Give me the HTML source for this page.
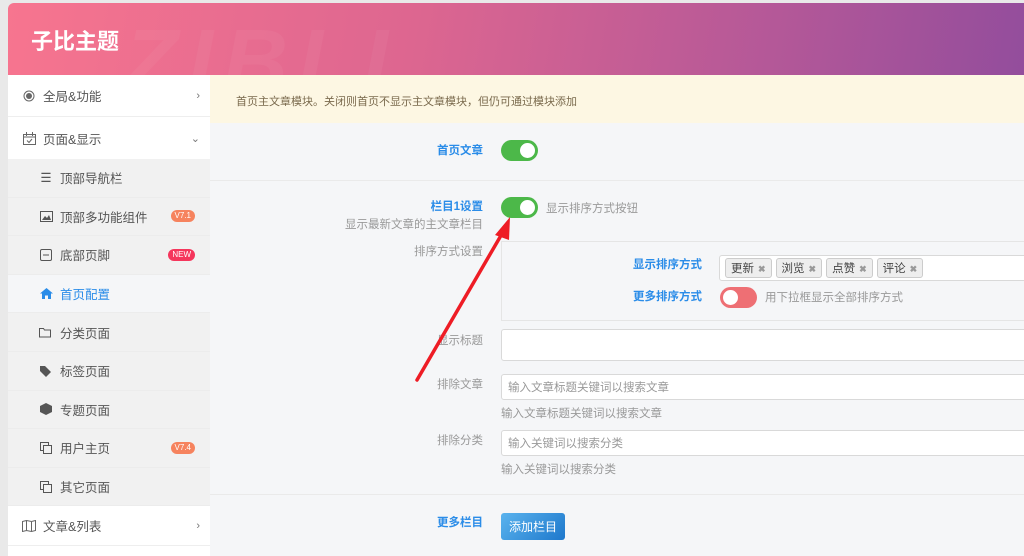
<!DOCTYPE html>
<html><head><meta charset="utf-8"><style>
*{box-sizing:border-box;margin:0;padding:0}
body{width:1024px;height:556px;overflow:hidden;background:#e9e9e9;font-family:"Liberation Sans","Noto Sans CJK SC",sans-serif;font-size:12px;color:#555;position:relative}
.abs{position:absolute}
.hdr{left:8px;top:3px;width:1016px;height:72px;background:linear-gradient(100deg,#f7758f 0%,#dd6690 40%,#b45898 75%,#934d9c 100%);border-radius:6px 0 0 0;overflow:hidden}
.hdr .t{position:absolute;left:23px;top:21px;font-size:22px;font-weight:bold;color:#fff}
.hdr .wm{position:absolute;left:115px;top:8px;font-size:90px;font-weight:900;font-style:italic;color:rgba(255,255,255,0.045);letter-spacing:10px;font-family:"Liberation Sans",sans-serif}
.side{left:8px;top:75px;width:202px;height:481px;background:#fff}
.it{position:absolute;left:0;width:202px;display:flex;align-items:center;font-size:12.5px;color:#555}
.top{background:#fff;height:42px;padding-left:14px}
.top .ic{width:14px;margin-right:7px;display:flex;justify-content:center;color:#777}
.top .ar{position:absolute;right:10px;color:#777;font-size:11px}
.sub{background:#f1f1f1;height:38.6px;padding-left:31px;border-bottom:1px solid #ececec}
.sub .ic{width:14px;margin-right:7px;color:#555;display:flex;justify-content:center}
.bd{position:absolute;right:15px;font-size:8px;color:#fff;border-radius:6px;padding:1px 4px;line-height:10px}
.main{left:210px;top:75px;width:814px;height:481px;background:#f5f6f8}
.note{left:210px;top:75px;width:814px;height:48px;background:#fdf7e3;color:#7a6a4d;font-size:11px;padding:18px 0 0 26px}
.lbl{position:absolute;text-align:right;font-size:11.5px;color:#999;white-space:nowrap}
.blue{color:#2a8ce8;font-weight:bold}
.tg{position:absolute;width:37px;height:21px;border-radius:11px;background:#4cb849}
.tg::after{content:"";position:absolute;right:3px;top:3px;width:15px;height:15px;border-radius:50%;background:#fff}
.tg.off{background:#ee6f74}
.tg.off::after{left:3px;right:auto}
.inp{position:absolute;background:#fff;border:1px solid #d9d9d9;border-radius:3px;color:#999;font-size:11.5px;padding-left:6px;display:flex;align-items:center}
.tag{display:inline-block;background:#eee;border:1px solid #ccc;border-radius:3px;padding:1px 5px;margin-right:4px;font-size:11.5px;color:#444}
.tag b{color:#999;font-size:9px;margin-left:4px}
</style></head><body>
<div class="abs hdr"><div class="wm">ZIBLL</div><div class="t">子比主题</div></div>
<div class="abs side">
<div class="it top" style="top:0;border-bottom:1px solid #eee"><span class="ic"><svg width="12" height="12"><circle cx="6" cy="6" r="5" fill="none" stroke="#666"/><circle cx="6" cy="6" r="3" fill="#666"/></svg></span>全局&amp;功能<span class="ar">›</span></div>
<div class="it top" style="top:42px"><span class="ic"><svg width="13" height="13"><rect x=".5" y="2.5" width="12" height="10" fill="none" stroke="#666"/><path d="M.5 5h12M3.5 0v4M9.5 0v4M4 8.5l2 2 3-3.5" fill="none" stroke="#666"/></svg></span>页面&amp;显示<span class="ar">⌄</span></div>
<div class="it sub" style="top:84px"><span class="ic">☰</span>顶部导航栏</div>
<div class="it sub" style="top:122.6px"><span class="ic"><svg width="13" height="11"><rect x=".5" y=".5" width="12" height="10" fill="none" stroke="#555"/><path d="M2 9l3-4 2 2 2-3 2 5z" fill="#555"/></svg></span>顶部多功能组件<span class="bd" style="background:#f6835e">V7.1</span></div>
<div class="it sub" style="top:161.2px"><span class="ic"><svg width="12" height="12"><rect x=".5" y=".5" width="11" height="11" rx="1.5" fill="none" stroke="#555"/><path d="M3 6h6" stroke="#555"/></svg></span>底部页脚<span class="bd" style="background:#f5365c">NEW</span></div>
<div class="it sub" style="top:199.8px;background:#f5f6f8;color:#2a8ce8"><span class="ic"><svg width="13" height="11"><path d="M6.5 0L13 5.5h-2V11H8V7.5H5V11H2V5.5H0z" fill="#2a8ce8"/></svg></span>首页配置</div>
<div class="it sub" style="top:238.4px"><span class="ic"><svg width="14" height="11"><path d="M.5 1.5h4l1 1.5h6v7h-11z" fill="none" stroke="#555"/></svg></span>分类页面</div>
<div class="it sub" style="top:277px"><span class="ic"><svg width="14" height="12"><path d="M1 1h5l6 6-5 5-6-6z" fill="#555"/></svg></span>标签页面</div>
<div class="it sub" style="top:315.6px"><span class="ic"><svg width="12" height="12"><path d="M6 0l6 3v6l-6 3-6-3V3z" fill="#555"/></svg></span>专题页面</div>
<div class="it sub" style="top:354.2px"><span class="ic"><svg width="12" height="12"><rect x=".5" y=".5" width="8" height="8" fill="none" stroke="#555"/><rect x="3.5" y="3.5" width="8" height="8" fill="#f1f1f1" stroke="#555"/></svg></span>用户主页<span class="bd" style="background:#f6835e">V7.4</span></div>
<div class="it sub" style="top:392.8px"><span class="ic"><svg width="12" height="12"><rect x=".5" y=".5" width="8" height="8" fill="none" stroke="#555"/><rect x="3.5" y="3.5" width="8" height="8" fill="#f1f1f1" stroke="#555"/></svg></span>其它页面</div>
<div class="it top" style="top:431px;height:40px;border-bottom:1px solid #eee"><span class="ic"><svg width="14" height="12"><path d="M.5 1.5l4-1 5 1 4-1v10l-4 1-5-1-4 1z M4.5.5v10 M9.5 1.5v10" fill="none" stroke="#666"/></svg></span>文章&amp;列表<span class="ar">›</span></div>
</div>
<div class="abs main"></div>
<div class="abs note">首页主文章模块。关闭则首页不显示主文章模块，但仍可通过模块添加</div>
<div class="abs" style="left:210px;top:180px;width:814px;height:1px;background:#eaeaea"></div>
<div class="abs" style="left:210px;top:494px;width:814px;height:1px;background:#eaeaea"></div>
<div class="lbl blue" style="right:541px;top:142px">首页文章</div>
<div class="tg" style="left:501px;top:140px"></div>
<div class="lbl blue" style="right:541px;top:198px">栏目1设置</div>
<div class="lbl" style="right:541px;top:216px">显示最新文章的主文章栏目</div>
<div class="tg" style="left:501px;top:197px"></div>
<div class="lbl" style="left:546px;top:200px">显示排序方式按钮</div>
<div class="lbl" style="right:541px;top:243px">排序方式设置</div>
<div class="abs" style="left:501px;top:241px;width:530px;height:80px;border:1px solid #e5e5e5;background:#f5f6f8"></div>
<div class="lbl blue" style="right:322px;top:256px">显示排序方式</div>
<div class="inp" style="left:719px;top:255px;width:310px;height:26px;padding-left:5px"><span class="tag">更新<b>✖</b></span><span class="tag">浏览<b>✖</b></span><span class="tag">点赞<b>✖</b></span><span class="tag">评论<b>✖</b></span></div>
<div class="lbl blue" style="right:322px;top:288px">更多排序方式</div>
<div class="tg off" style="left:720px;top:287px"></div>
<div class="lbl" style="left:765px;top:289px">用下拉框显示全部排序方式</div>
<div class="lbl" style="right:541px;top:332px">显示标题</div>
<div class="inp" style="left:501px;top:329px;width:530px;height:32px"></div>
<div class="lbl" style="right:541px;top:376px">排除文章</div>
<div class="inp" style="left:501px;top:374px;width:530px;height:26px">输入文章标题关键词以搜索文章</div>
<div class="lbl" style="left:501px;top:405px">输入文章标题关键词以搜索文章</div>
<div class="lbl" style="right:541px;top:432px">排除分类</div>
<div class="inp" style="left:501px;top:430px;width:530px;height:26px">输入关键词以搜索分类</div>
<div class="lbl" style="left:501px;top:461px">输入关键词以搜索分类</div>
<div class="lbl blue" style="right:541px;top:514px">更多栏目</div>
<div class="abs" style="left:501px;top:513px;width:64px;height:27px;border-radius:3px;background:linear-gradient(135deg,#5ab3ee,#1e78cc);color:#fff;font-size:12px;display:flex;align-items:center;justify-content:center">添加栏目</div>
<svg class="abs" style="left:0;top:0" width="1024" height="556"><path d="M417 380L503 232" stroke="#ee1c25" stroke-width="3.5" stroke-linecap="round"/><path d="M510 217L495 235L509 240Z" fill="#ee1c25"/></svg>
</body></html>
